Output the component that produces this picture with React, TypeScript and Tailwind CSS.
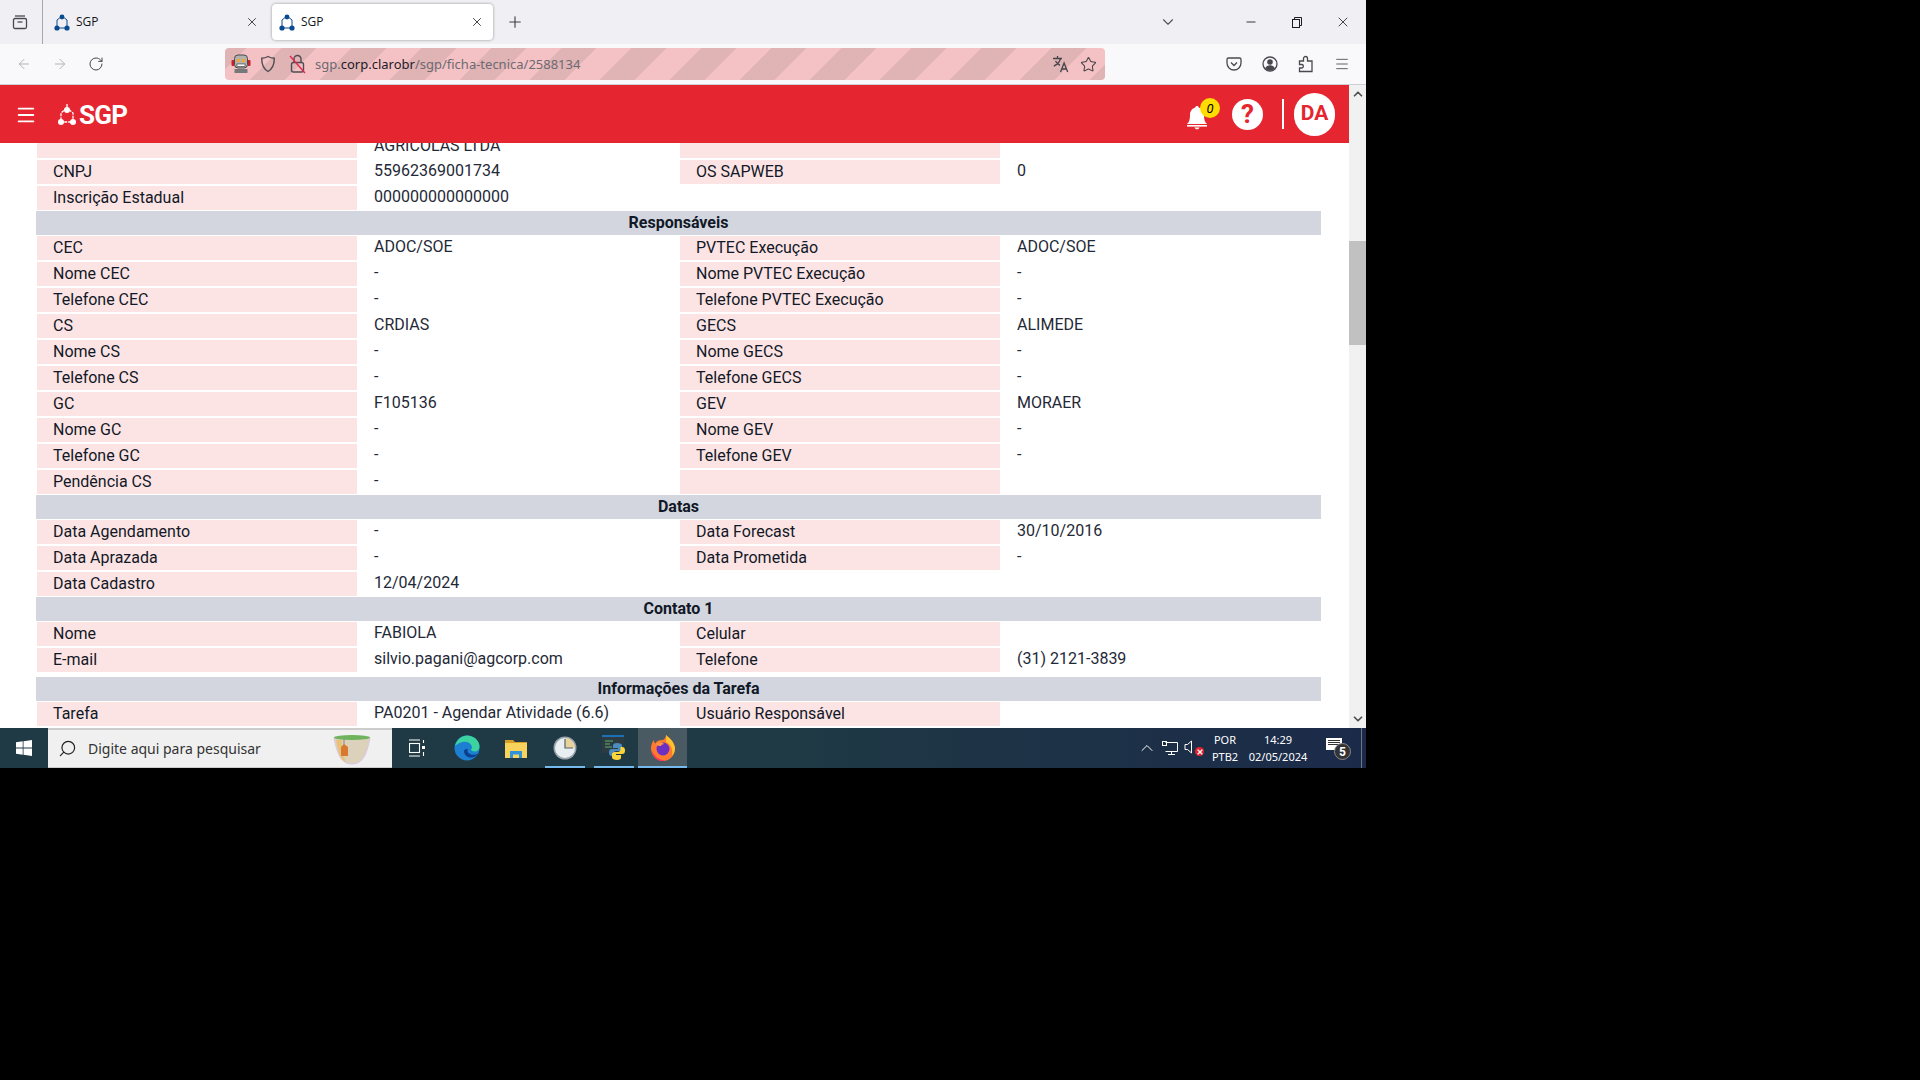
import { ArrowLeft, ArrowRight, ChevronDown, ChevronUp, Menu, Minus, Plus, RotateCw, Search, Star, X } from "lucide-react";

type Cell = [string, string];
type Pair = [Cell, Cell?];

const responsaveis: Pair[] = [
  [["CEC", "ADOC/SOE"], ["PVTEC Execução", "ADOC/SOE"]],
  [["Nome CEC", "-"], ["Nome PVTEC Execução", "-"]],
  [["Telefone CEC", "-"], ["Telefone PVTEC Execução", "-"]],
  [["CS", "CRDIAS"], ["GECS", "ALIMEDE"]],
  [["Nome CS", "-"], ["Nome GECS", "-"]],
  [["Telefone CS", "-"], ["Telefone GECS", "-"]],
  [["GC", "F105136"], ["GEV", "MORAER"]],
  [["Nome GC", "-"], ["Nome GEV", "-"]],
  [["Telefone GC", "-"], ["Telefone GEV", "-"]],
  [["Pendência CS", "-"], ["", ""]],
];

const datas: Pair[] = [
  [["Data Agendamento", "-"], ["Data Forecast", "30/10/2016"]],
  [["Data Aprazada", "-"], ["Data Prometida", "-"]],
  [["Data Cadastro", "12/04/2024"]],
];

const contato: Pair[] = [
  [["Nome", "FABIOLA"], ["Celular", ""]],
  [["E-mail", "silvio.pagani@agcorp.com"], ["Telefone", "(31) 2121-3839"]],
];

function Row({ pair, tall }: { pair: Pair; tall?: boolean }) {
  const [a, b] = pair;
  return (
    <div className="mb-0.5 grid h-6 grid-cols-[321px_323px_320px_321px] text-[16px] leading-6">
      <div className="ml-px bg-[#fde4e4] pl-4 text-[#111827]">{a[0]}</div>
      <div className={`pl-[17px] text-[#1f2937] ${tall ? "leading-6" : "leading-[22px]"}`}>{a[1]}</div>
      {b && <div className="bg-[#fde4e4] pl-4 text-[#111827]">{b[0]}</div>}
      {b && <div className="pl-[17px] leading-[22px] text-[#1f2937]">{b[1]}</div>}
    </div>
  );
}

function SectionTitle({ children, className = "" }: { children: string; className?: string }) {
  return (
    <div className={`mb-px h-6 bg-[#d3d6de] text-center text-[16px] font-bold leading-6 text-[#111827] ${className}`}>
      {children}
    </div>
  );
}

function Favicon() {
  return (
    <svg width="16" height="18" viewBox="0 0 16 18" fill="none">
      <path d="M8 3 3 7v8h10V7z" stroke="#0b4a8f" strokeWidth="1" />
      <circle cx="8" cy="4" r="2.4" fill="#0b4a8f" />
      <circle cx="3" cy="15" r="2.6" fill="#0b4a8f" />
      <circle cx="13" cy="15" r="2.6" fill="#0b4a8f" />
    </svg>
  );
}

function Tab({ active }: { active?: boolean }) {
  return (
    <div
      className={`flex h-9 w-[221px] items-center rounded pl-[7px] pr-[9px] ${
        active ? "bg-white shadow-[0_0_3px_rgba(0,0,0,0.4)]" : ""
      }`}
    >
      <Favicon />
      <span className="ml-[6px] flex-1 font-['Open_Sans',sans-serif] text-[12px] text-[#15141a]">SGP</span>
      <X className="h-3.5 w-3.5 text-[#3a3a3f]" strokeWidth={1.6} />
    </div>
  );
}

function Robot() {
  return (
    <svg width="20" height="20" viewBox="0 0 20 20">
      <rect x="0.5" y="6" width="3" height="6" rx="1" fill="#c8202c" />
      <rect x="16.5" y="6" width="3" height="6" rx="1" fill="#c8202c" />
      <rect x="3.5" y="1" width="13" height="13" rx="3.5" fill="#b3b0ad" stroke="#4b4a4a" />
      <rect x="6" y="5" width="3" height="3" fill="#f4a72c" />
      <rect x="11" y="5" width="3" height="3" fill="#f4a72c" />
      <rect x="6" y="10" width="8" height="2.5" fill="#fff" stroke="#333" strokeWidth="0.6" />
      <rect x="3.5" y="15" width="13" height="4" fill="#77787a" />
    </svg>
  );
}

function ShieldIcon() {
  return (
    <svg width="16" height="18" viewBox="0 0 16 18" fill="none" stroke="#4f4c52" strokeWidth="1.4">
      <path d="M8 1.5c2 1.2 4 1.7 6.3 1.8 0 6-1.4 10.5-6.3 13.2C3.1 13.8 1.7 9.3 1.7 3.3 4 3.2 6 2.7 8 1.5z" />
    </svg>
  );
}

function BrokenLock() {
  return (
    <svg width="17" height="20" viewBox="0 0 17 20" fill="none" strokeWidth="1.4">
      <path d="M5 8V5a3.5 3.5 0 0 1 7 0v3" stroke="#4f4c52" />
      <rect x="2.5" y="8.5" width="12" height="9.5" rx="2" stroke="#4f4c52" />
      <path d="M1 2l15 17" stroke="#e22850" />
    </svg>
  );
}

function TranslateIcon() {
  return (
    <svg width="18" height="18" viewBox="0 0 18 18" fill="none" stroke="#45434a" strokeWidth="1.3">
      <path d="M1 3.5h9M5.5 1v2.5M8.5 3.5c-.8 3.4-3 6-6.7 7.6M3.5 6c1 2 2.600 3.400 4.500 4.300" />
      <path d="M8.500 17l3.600-9 3.600 9M9.800 14h4.600" />
    </svg>
  );
}

function PocketIcon() {
  return (
    <svg width="16" height="16" viewBox="0 0 16 16" fill="none" stroke="#4a484f" strokeWidth="1.3">
      <path d="M2.500 2h11A1.500 1.500 0 0 1 15 3.500V7a7 7 0 0 1-14 0V3.500A1.500 1.500 0 0 1 2.500 2z" />
      <path d="M5 6.500 8 9.500l3-3" />
    </svg>
  );
}

function AccountIcon() {
  return (
    <svg width="16" height="16" viewBox="0 0 16 16" fill="none">
      <circle cx="8" cy="8" r="7" stroke="#4a484f" strokeWidth="1.3" />
      <circle cx="8" cy="6" r="2.800" fill="#4a484f" />
      <path d="M3 12.500c1-2.300 3-3.200 5-3.200s4 .9 5 3.200c-1.300 1.300-3 2-5 2s-3.700-.7-5-2z" fill="#4a484f" />
    </svg>
  );
}

function ExtensionIcon() {
  return (
    <svg width="16" height="18" viewBox="0 0 16 18" fill="none" stroke="#4a484f" strokeWidth="1.3">
      <path d="M1.500 6h4V3.500a2 2 0 0 1 4 0V6H14v10.500H1.500v-3.500H4a1.800 1.800 0 0 0 0-3.500H1.500z" />
    </svg>
  );
}

function TabListIcon() {
  return (
    <svg width="16" height="16" viewBox="0 0 16 16" fill="none" stroke="#4a484f" strokeWidth="1.3">
      <path d="M3 2h10" />
      <rect x="1.500" y="4.500" width="13" height="10" rx="1.500" />
      <path d="M5.500 8h5" />
    </svg>
  );
}

function RestoreIcon() {
  return (
    <svg width="10" height="11" viewBox="0 0 10 11" fill="none" stroke="#1c1b22">
      <rect x="0.500" y="2.500" width="7" height="8" />
      <path d="M2.500 2.500v-2h7v8h-2" />
    </svg>
  );
}

function SgpMark() {
  return (
    <svg width="18" height="22" viewBox="0 0 18 22" fill="none">
      <path d="M9 4 3 9v9h12V9z" stroke="#fff" strokeWidth="1.300" strokeDasharray="3 1" />
      <path d="M9 0v6" stroke="#fff" strokeWidth="1.300" />
      <circle cx="9" cy="6" r="3" fill="#fff" />
      <circle cx="3" cy="18" r="3" fill="#fff" />
      <circle cx="15" cy="18" r="3" fill="#fff" />
    </svg>
  );
}

function Bell() {
  return (
    <svg width="22" height="25" viewBox="0 0 22 25" fill="#fff">
      <path d="M11 1c1 0 1.700.7 1.700 1.600C16 3.500 18 6.300 18 10c0 4.500.7 7 3 9H1c2.300-2 3-4.500 3-9 0-3.700 2-6.500 5.300-7.400C9.300 1.700 10 1 11 1z" />
      <rect x="1" y="20" width="20" height="1.600" />
      <path d="M8.500 22.500h5c-.3 1-1.300 1.800-2.500 1.800s-2.200-.8-2.500-1.800z" />
    </svg>
  );
}

function WindowsLogo() {
  return (
    <svg width="16" height="16" viewBox="0 0 16 16" fill="#fff">
      <path d="M0 2.300 6.700 1.300v6.300H0zM7.500 1.200 16 0v7.600H7.500zM0 8.400h6.700v6.300L0 13.700zM7.500 8.400H16V16l-8.500-1.200z" />
    </svg>
  );
}

function TeaCup() {
  return (
    <svg width="38" height="32" viewBox="0 0 38 32">
      <path d="M1 5c4 20 9 26 18 26s14-6 18-26z" fill="#dcd2bc" stroke="#d9c6e6" />
      <path d="M3 7c3 16 5 20 10 22-3-6-4-14-4-22z" fill="#e8c27a" />
      <ellipse cx="19" cy="4.500" rx="18" ry="2.500" fill="#6fb35c" />
      <path d="M11 6v6" stroke="#888" />
      <path d="M8 14l3-3 4 3v9H8z" fill="#d9782f" />
    </svg>
  );
}

function TaskView() {
  return (
    <svg width="16" height="18" viewBox="0 0 16 18" fill="none" stroke="#fff" strokeWidth="1.100">
      <path d="M0 1h11M0 17h11" />
      <rect x="0.500" y="4.500" width="10" height="9" />
      <path d="M14.500 1v3" />
      <rect x="13" y="7" width="3" height="3" fill="#fff" stroke="none" />
      <path d="M14.500 13v4" />
    </svg>
  );
}

function EdgeLogo() {
  return (
    <svg width="26" height="26" viewBox="0 0 26 26">
      <circle cx="13" cy="13" r="12.500" fill="#1c7fd1" />
      <path d="M1 11C3 4 8 .5 13 .5c7 0 12.500 5 12.500 11 0 3-2 5-5 5-2 0-3.500-1-3.500-2 1-1 1.200-2.200.6-3.800C16 7 12 6 8.500 7 5 8 2.500 9.500 1 11z" fill="#3bd3a0" />
      <path d="M10 16c0 4 3.500 7 8 6.500 2.500-.3 5-1.700 6.500-4-3 1.500-7 1.800-9.500 0-1.600-1.200-2-3-1-4.500-1.500-.2-4 .2-4 2z" fill="#0c3f8f" />
    </svg>
  );
}

function FolderIcon() {
  return (
    <svg width="22" height="22" viewBox="0 0 22 22">
      <path d="M0 3h8l2 2H22v3H0z" fill="#d79f25" />
      <rect y="6" width="22" height="15" fill="#f9d45c" />
      <path d="M5 21v-7h12v7h-3v-3.500H8V21z" fill="#2f93d8" />
    </svg>
  );
}

function ClockIcon() {
  return (
    <svg width="24" height="24" viewBox="0 0 24 24">
      <circle cx="12" cy="12" r="11.500" fill="#9aa3ad" />
      <circle cx="12" cy="12" r="10" fill="#e9eef3" />
      <path d="M12 12V2a10 10 0 0 1 10 10z" fill="#e8d39a" />
      <path d="M12 3v9h8" fill="none" stroke="#55626e" strokeWidth="1.200" />
    </svg>
  );
}

function PythonIcon() {
  return (
    <svg width="24" height="26" viewBox="0 0 24 26">
      <rect x="0" y="0" width="22" height="18" fill="#2c3a42" />
      <rect x="0" y="0" width="22" height="2" fill="#1d6fb8" />
      <path d="M3 6h8M3 9h5M3 12h7" stroke="#5fae6a" strokeWidth="1" />
      <path d="M15 8c-3 0-4 1-4 2.500V13h5v1h-6c-2 0-3 1-3 3.500S8 21 10 21h1.500v-2.500c0-1.500 1-2.500 3-2.500h3c1.500 0 2.500-1 2.500-2.500v-3C20 9 18 8 15 8z" fill="#4b8bbe" />
      <path d="M15 25c3 0 4-1 4-2.500V20h-5v-1h6c2 0 3-1 3-3.500s-1-3.500-3-3.500h-1.500v2.500c0 1.500-1 2.500-3 2.500h-3c-1.500 0-2.500 1-2.500 2.500v3c0 1.500 2 2.500 5 2.500z" fill="#ffd43b" />
    </svg>
  );
}

function FirefoxLogo() {
  return (
    <svg width="24" height="26" viewBox="0 0 24 26">
      <path d="M15 0c3 3 8 6 9 13 0 7-5 13-12 13S0 20 0 13C0 9 2 6 3 5c0 2 .5 3 1.500 3.500C6 5 10 5 12 5c1.500-1 3-2.500 3-5z" fill="#ff7a2f" />
      <path d="M15 0c3 3 8 6 9 13 0 3-1 6-3 8 1-5 0-11-6-14 0-2 .5-4 0-7z" fill="#ffc22e" />
      <path d="M1 15c2 7 8 11 14 10-7 3-14-2-14-10z" fill="#ff2e62" />
      <circle cx="12" cy="14" r="6.500" fill="#6b2fc4" />
      <path d="M5 9c2-2 6-2 8 0-2 .5-3 1-3 2-2 0-4-.5-5-2z" fill="#ff9640" />
    </svg>
  );
}

function TrayMonitor() {
  return (
    <svg width="16" height="14" viewBox="0 0 16 14" fill="none" stroke="#fff" strokeWidth="1">
      <path d="M3.500 1.500H15.500V10.500H3.500" />
      <rect x="0.500" y="0.500" width="4" height="4" />
      <path d="M9.500 10.500v3M6 13.500h7" />
    </svg>
  );
}

function TraySpeaker() {
  return (
    <div className="relative h-4 w-5">
      <svg width="10" height="14" viewBox="0 0 10 14" fill="none" stroke="#fff" strokeWidth="1">
        <path d="M1 4.500h2.500L7.500 1v12L3.500 9.500H1z" />
      </svg>
      <span className="absolute bottom-0 right-0 flex h-[9px] w-[9px] items-center justify-center rounded-full bg-[#e5232f]">
        <X className="h-2 w-2 text-white" strokeWidth={3.500} />
      </span>
    </div>
  );
}

function TaskIcon({ children, running, active }: { children: React.ReactNode; running?: boolean; active?: boolean }) {
  return (
    <div className={`relative flex h-10 w-[49px] items-center justify-center ${active ? "bg-[#4a5a62]" : ""}`}>
      {children}
      {running && <span className="absolute bottom-0 h-0.5 w-10 bg-[#76b9ed]" />}
      {active && <span className="absolute bottom-0 h-0.5 w-full bg-[#76b9ed]" />}
    </div>
  );
}

export default function App() {
  return (
    <div className="h-[1080px] w-[1920px] overflow-hidden bg-black font-['Roboto',sans-serif]">
      <div className="flex h-[768px] w-[1366px] flex-col">
        {/* browser chrome */}
        <div className="flex h-11 items-center bg-[#f0f0f4]">
          <div className="flex h-full w-[43px] items-center justify-center border-r border-[#a8a8ac] pr-0.5">
            <TabListIcon />
          </div>
          <div className="ml-[4px] flex gap-1">
            <Tab />
            <Tab active />
          </div>
          <Plus className="ml-[13px] h-[18px] w-[18px] text-[#3f3e44]" strokeWidth={1.500} />
          <div className="flex-1" />
          <ChevronDown className="mr-[67px] h-[18px] w-[18px] text-[#55545a]" strokeWidth={1.500} />
          <Minus className="mr-[34px] h-3.5 w-3.5 text-[#1c1b22]" strokeWidth={1.500} />
          <RestoreIcon />
          <X className="ml-[33px] mr-[15px] h-4 w-4 text-[#1c1b22]" strokeWidth={1.200} />
        </div>

        <div className="flex h-[41px] items-center border-b border-[#cfcfd8] bg-[#f9f9fb]">
          <ArrowLeft className="ml-4 h-4 w-4 text-[#b3b3b8]" strokeWidth={1.500} />
          <ArrowRight className="ml-5 h-4 w-4 text-[#b3b3b8]" strokeWidth={1.500} />
          <RotateCw className="ml-5 h-4 w-4 text-[#46454b]" strokeWidth={1.500} />
          <div className="ml-[121px] flex h-8 w-[880px] items-center rounded bg-[repeating-linear-gradient(135deg,#e0b3b5_0_15.5px,#f4c2c5_15.5px_40.25px,#e0b3b5_40.25px_49.5px)] pl-[6px] pr-2">
            <Robot />
            <span className="ml-[9px]">
              <ShieldIcon />
            </span>
            <span className="ml-[13px]">
              <BrokenLock />
            </span>
            <span className="ml-[9px] mt-0.5 flex-1 font-['Noto_Sans',sans-serif] text-[13px] text-[#6c6a70]">
              sgp.<span className="text-[#1d1b26]">corp.clarobr</span>/sgp/ficha-tecnica/2588134
            </span>
            <span className="translate-x-px">
              <TranslateIcon />
            </span>
            <Star className="ml-[11px] h-[17px] w-[17px] text-[#45434a]" strokeWidth={1.500} />
          </div>
          <div className="ml-[121px]">
            <PocketIcon />
          </div>
          <div className="ml-5">
            <AccountIcon />
          </div>
          <div className="ml-5">
            <ExtensionIcon />
          </div>
          <Menu className="ml-5 h-4 w-4 text-[#4a484f]" strokeWidth={1.300} />
        </div>

        <div className="flex min-h-0 flex-1">
          <div className="flex min-w-0 flex-1 flex-col">
            {/* app header */}
            <header className="z-10 flex h-[58px] shrink-0 items-center bg-[#e52630] text-white">
              <Menu className="ml-[15px] mt-px h-[22px] w-[22px]" strokeWidth={2} />
              <span className="ml-[21px] mt-0.5">
                <SgpMark />
              </span>
              <span className="ml-[3px] mt-[3px] text-[26px] font-bold tracking-[-0.8px]">SGP</span>
              <div className="flex-1" />
              <div className="relative mr-[14px] flex h-8 w-[26px] items-end justify-start">
                <Bell />
                <span className="absolute top-0 right-[-8px] flex h-5 w-5 items-center justify-center rounded-full bg-[#ffdd00] text-[13px] italic leading-none text-black">
                  0
                </span>
              </div>
              <div className="ml-[6px] flex h-[31px] w-[31px] items-center justify-center rounded-full bg-white text-[26px] font-bold leading-none text-[#e52630]">
                ?
              </div>
              <div className="ml-[19px] h-[30px] w-0.5 bg-white" />
              <div className="ml-[10px] mr-[14px] flex h-[43px] w-[41px] items-center justify-center rounded-full bg-white text-[21px] font-bold text-[#e52630]">
                DA
              </div>
            </header>

            {/* ficha tecnica, scrolled */}
            <div className="min-h-0 flex-1 overflow-hidden bg-white pl-9 pr-[28px]">
              <div className="-mt-[9px]">
                <Row tall pair={[["", "AGRICOLAS LTDA"], ["", ""]]} />
                <Row pair={[["CNPJ", "55962369001734"], ["OS SAPWEB", "0"]]} />
                <Row pair={[["Inscrição Estadual", "000000000000000"]]} />
                <div className="-mt-px" />
                <SectionTitle>Responsáveis</SectionTitle>
                {responsaveis.map((pair, i) => (
                  <Row key={i} pair={pair} />
                ))}
                <div className="-mt-px" />
                <SectionTitle>Datas</SectionTitle>
                {datas.map((pair, i) => (
                  <Row key={i} pair={pair} />
                ))}
                <div className="-mt-px" />
                <SectionTitle>Contato 1</SectionTitle>
                {contato.map((pair, i) => (
                  <Row key={i} pair={pair} />
                ))}
                <SectionTitle className="mt-[5px]">Informações da Tarefa</SectionTitle>
                <Row pair={[["Tarefa", "PA0201 - Agendar Atividade (6.6)"], ["Usuário Responsável", ""]]} />
              </div>
            </div>
          </div>

          {/* scrollbar */}
          <div className="flex w-[17px] shrink-0 flex-col items-center bg-[#f1f1f1]">
            <ChevronUp className="mt-0.5 h-3.5 w-3.5 text-[#505050]" strokeWidth={3} />
            <div className="mt-[140px] h-[104px] w-full bg-[#c1c1c1]" />
            <div className="flex-1" />
            <ChevronDown className="mb-0.5 h-3.5 w-3.5 text-[#505050]" strokeWidth={3} />
          </div>
        </div>

        {/* windows taskbar */}
        <div className="flex h-10 shrink-0 items-center bg-[linear-gradient(90deg,#1f3a44,#1f3a44_55%,#1b2a49)] text-white">
          <div className="flex w-12 justify-center">
            <WindowsLogo />
          </div>
          <div className="flex h-10 w-[344px] items-center border-y border-t-2 border-[#cccccc] bg-[#f0f0f0] pl-[10px] pr-[21px]">
            <Search className="h-[19px] w-[19px] -scale-x-100 text-[#222]" strokeWidth={1.500} />
            <span className="ml-[11px] flex-1 font-['Noto_Sans',sans-serif] text-[14px] text-[#333]">
              Digite aqui para pesquisar
            </span>
            <TeaCup />
          </div>
          <TaskIcon>
            <TaskView />
          </TaskIcon>
          <span className="w-px" />
          <TaskIcon>
            <EdgeLogo />
          </TaskIcon>
          <TaskIcon>
            <FolderIcon />
          </TaskIcon>
          <TaskIcon running>
            <ClockIcon />
          </TaskIcon>
          <TaskIcon running>
            <PythonIcon />
          </TaskIcon>
          <TaskIcon active>
            <FirefoxLogo />
          </TaskIcon>
          <div className="flex-1" />
          <ChevronUp className="h-5 w-5" strokeWidth={1.200} />
          <div className="ml-[5px]">
            <TrayMonitor />
          </div>
          <div className="ml-[6px]">
            <TraySpeaker />
          </div>
          <div className="ml-[6px] w-[30px] text-center font-['Noto_Sans',sans-serif] text-[11px] leading-[17px]">
            <div>POR</div>
            <div>PTB2</div>
          </div>
          <div className="ml-[3px] w-[70px] text-center font-['Noto_Sans',sans-serif] text-[11px] leading-[17px]">
            <div>14:29</div>
            <div>02/05/2024</div>
          </div>
          <div className="relative ml-[13px] mr-[15px] h-6 w-[20px]">
            <div className="absolute left-0 top-[2px] flex h-3 w-4 flex-col gap-px bg-white px-0.5 pt-0.5">
              <span className="h-px bg-[#333]" />
              <span className="h-px bg-[#333]" />
              <span className="h-px bg-[#333]" />
            </div>
            <span className="absolute bottom-0 right-[-5px] flex h-[17px] w-[17px] items-center justify-center rounded-full border border-[#8a8a8a] bg-[#333] text-[12px] font-bold text-white">
              5
            </span>
          </div>
          <div className="mr-1 h-full w-px bg-[#6d7a8c]" />
        </div>
      </div>
    </div>
  );
}
